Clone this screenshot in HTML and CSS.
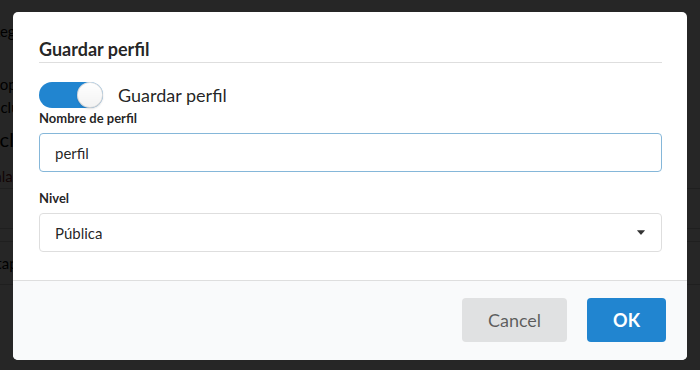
FILE: index.html
```html
<!DOCTYPE html>
<html lang="es">
<head>
  <meta charset="UTF-8" />
  <meta name="viewport" content="width=device-width, initial-scale=1.0" />
  <title>Guardar perfil</title>
  <link rel="stylesheet" href="styles.css">
</head>
<body>
  <div class="page">
    <p class="row r1">Regla general</p>
    <p class="row r2">Copiar</p>
    <p class="row r3">Incluir</p>
    <p class="row big r4">Incluir todo</p>
    <p class="row red r5">Escala</p>
    <div class="rule r6"></div>
    <div class="rule r7"></div>
    <div class="rule r8"></div>
    <p class="row r9">Etapa</p>
    <div class="rule r10"></div>
  </div>

  <div class="dimmer">
    <div class="modal">
      <div class="content">
        <h2 class="header">Guardar perfil</h2>

        <label class="toggle">
          <input type="checkbox" checked />
          <span class="track"><span class="knob"></span></span>
          <span class="toggle-text">Guardar perfil</span>
        </label>

        <label class="field-label" for="perfil">Nombre de perfil</label>
        <input class="text-input focus" type="text" id="perfil" value="perfil" />

        <label class="field-label nivel">Nivel</label>
        <div class="dropdown">
          <span>Pública</span>
          <svg class="caret" width="8" height="5" viewBox="0 0 8 5">
            <path d="M0.3 0.2 H7.7 Q8 0.4 7.7 0.8 L4.4 4.6 Q4 5 3.6 4.6 L0.3 0.8 Q0 0.4 0.3 0.2 Z" fill="#333"/>
          </svg>
        </div>
      </div>

      <div class="actions">
        <button class="btn cancel" type="button">Cancel</button>
        <button class="btn ok" type="button">OK</button>
      </div>
    </div>
  </div>
</body>
</html>
```

FILE: styles.css
```css
body {
  margin: 0;
  padding: 0;
  background-color: #fff;
  font-family: Lato, "Open Sans", Arial, sans-serif;
  color: rgba(0, 0, 0, 0.87);
  height: 370px;
  overflow: hidden;
}

/* page behind the dimmer */
.page {
  padding-top: 22px;
}

.row {
  margin: 0;
  font-size: 15px;
  line-height: 18px;
  color: #000;
  white-space: nowrap;
}

.big {
  font-size: 20px;
}

.red {
  color: #7a1a1a;
}

.r1 { text-indent: -9px; }
.r2 { margin-top: 35px; text-indent: -10px; }
.r3 { margin-top: 5px; text-indent: -12px; }
.r4 { margin-top: 14px; text-indent: -17px; }
.r5 { margin-top: 19px; text-indent: -28px; }
.r9 { margin-top: 12px; text-indent: -12px; }

.rule {
  height: 1px;
  background-color: #cfcfcf;
}

.r6 { margin-top: 3px; }
.r7 { margin-top: 39px; }
.r8 { margin-top: 12px; }
.r10 { margin-top: 12px; }

/* modal */
.dimmer {
  position: fixed;
  top: 0;
  left: 0;
  right: 0;
  bottom: 0;
  background-color: rgba(0, 0, 0, 0.85);
  padding: 12px 13px 10px 13px;
}

.modal {
  background-color: #fff;
  border-radius: 5px;
  height: 348px;
  display: flex;
  flex-direction: column;
  overflow: hidden;
}

.content {
  flex: 1;
  padding: 0 25px 0 26px;
}

.header {
  margin: 0;
  padding: 26px 0 2px 0;
  font-size: 18px;
  font-weight: 700;
  line-height: 22px;
  border-bottom: 1px solid #dedede;
}

.toggle {
  display: flex;
  align-items: center;
  margin-top: 19px;
  height: 26px;
  cursor: pointer;
}

.toggle input {
  display: none;
}

.track {
  position: relative;
  width: 64px;
  height: 26px;
  border-radius: 13px;
  background-color: #2185d0;
}

.knob {
  position: absolute;
  top: 0;
  left: 38px;
  width: 26px;
  height: 26px;
  border-radius: 50%;
  background: linear-gradient(transparent, rgba(0, 0, 0, 0.05)) #fff;
  box-shadow: 0 1px 2px 0 rgba(34, 36, 38, 0.15), 0 0 0 1px rgba(34, 36, 38, 0.15) inset;
}

.toggle-text {
  margin-left: 15px;
  font-size: 18px;
  line-height: 26px;
}

.field-label {
  display: block;
  margin: 2px 0 7px 0;
  font-size: 13px;
  font-weight: 700;
  line-height: 16px;
}

.nivel {
  margin-top: 18px;
}

.text-input,
.dropdown {
  display: flex;
  align-items: center;
  width: 100%;
  height: 39px;
  box-sizing: border-box;
  padding: 0 15px;
  border: 1px solid #dedede;
  border-radius: 4px;
  font-family: inherit;
  font-size: 15px;
  color: rgba(0, 0, 0, 0.87);
  background-color: #fff;
}

.text-input.focus {
  border-color: #85b7d9;
  outline: none;
}

.dropdown {
  justify-content: space-between;
  padding-right: 16px;
}

.actions {
  display: flex;
  justify-content: flex-end;
  gap: 20px;
  padding: 17px 21px 18px 0;
  background-color: #f9fafb;
  border-top: 1px solid #dedede;
}

.btn {
  height: 44px;
  padding: 0 26px;
  border: none;
  border-radius: 4px;
  font-family: inherit;
  font-size: 18px;
  cursor: pointer;
}

.cancel {
  background-color: #e0e1e2;
  color: rgba(0, 0, 0, 0.6);
}

.ok {
  background-color: #2185d0;
  color: #fff;
  font-weight: 700;
}
```
